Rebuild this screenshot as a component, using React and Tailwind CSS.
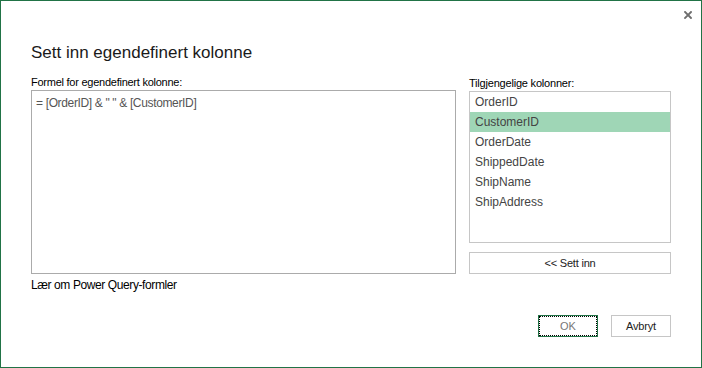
import React from "react";

const items = ["OrderID", "CustomerID", "OrderDate", "ShippedDate", "ShipName", "ShipAddress"];

export default function App() {
  return (
    <div
      className="w-[702px] h-[368px] border border-[#217346] bg-white flex flex-col overflow-hidden"
      style={{ fontFamily: '"Liberation Sans", Arial, sans-serif' }}
    >
      <div className="h-[40px] flex justify-end pt-[10px] pr-[9px]">
        <svg width="8" height="8" viewBox="0 0 8 8">
          <path d="M1 1 L7 7 M7 1 L1 7" stroke="#6e6e6e" strokeWidth="1.9" strokeLinecap="square" />
        </svg>
      </div>
      <div className="pl-[30px] h-[24px] text-[17px] leading-[24px] text-[#1a1a1a]">
        Sett inn egendefinert kolonne
      </div>
      <div className="mt-[10px] flex pl-[30px]">
        <div className="flex flex-col w-[425px]">
          <div className="h-[15px] text-[11px] leading-[15px] tracking-[-0.25px] text-black">
            Formel for egendefinert kolonne:
          </div>
          <div className="h-[184px] border border-[#ababab] pl-[4px] pt-[4px] text-[12px] leading-[16px] tracking-[-0.35px] text-[#555]">
            = [OrderID] &amp; " " &amp; [CustomerID]
          </div>
          <div className="mt-[3px] h-[16px] text-[12px] leading-[16px] tracking-[-0.4px] text-black">
            Lær om Power Query-formler
          </div>
        </div>
        <div className="ml-[13px] flex flex-col w-[202px]">
          <div className="h-[16px] text-[11px] leading-[16px] tracking-[-0.2px] text-black">
            Tilgjengelige kolonner:
          </div>
          <div className="h-[152px] border border-[#c6c6c6] flex flex-col">
            {items.map((it) => (
              <div
                key={it}
                className={
                  "h-[20px] pl-[5px] text-[12px] leading-[20px] text-[#444] " +
                  (it === "CustomerID" ? "bg-[#9fd6b6]" : "")
                }
              >
                {it}
              </div>
            ))}
          </div>
          <div className="mt-[9px] h-[22px] border border-[#c6c6c6] flex items-center justify-center text-[11px] tracking-[-0.2px] text-[#222]">
            &lt;&lt; Sett inn
          </div>
        </div>
      </div>
      <div className="mt-[22px] flex justify-end pr-[30px] gap-[13px]">
        <div className="w-[60px] h-[22px] border border-[#217346] p-0">
          <div className="w-full h-full border border-dotted border-black flex items-center justify-center text-[11px] text-[#777]">
            OK
          </div>
        </div>
        <div className="w-[60px] h-[22px] border border-[#c6c6c6] flex items-center justify-center text-[11px] tracking-[-0.2px] text-[#222]">
          Avbryt
        </div>
      </div>
    </div>
  );
}
